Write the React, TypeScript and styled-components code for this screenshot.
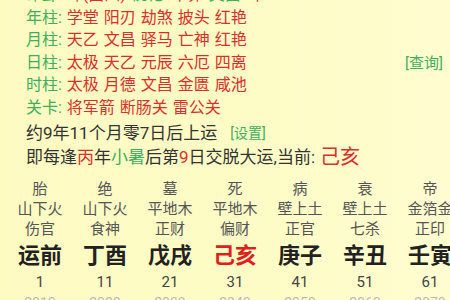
import React from "react";
import styled, { createGlobalStyle } from "styled-components";

const Global = createGlobalStyle`
  html, body { margin: 0; padding: 0; }
  body {
    width: 450px;
    height: 300px;
    overflow: hidden;
    background: linear-gradient(90deg, #fdfbc2 0%, #fefcc6 60%, #fffdd0 100%);
    font-family: "Roboto", "Noto Sans CJK SC", sans-serif;
  }
`;

const Page = styled.div`
  margin-top: -16px;
  display: flex;
  flex-direction: column;
`;

const InfoBlock = styled.div`
  padding-left: 26px;
  padding-right: 7px;
  display: flex;
  flex-direction: column;
`;

const InfoLine = styled.div`
  height: 22.5px;
  line-height: 22.5px;
  font-size: 16px;
  word-spacing: 1px;
  white-space: nowrap;
  display: flex;
  justify-content: space-between;
  align-items: center;
`;

const Label = styled.span`
  color: #3fae5e;
`;

const Value = styled.span`
  color: #d8302c;
`;

const Link = styled.span`
  color: #3fae5e;
  font-size: 15px;
`;

const Sentence = styled.div<{ $top?: number }>`
  padding-left: 26px;
  height: 24px;
  line-height: 24px;
  font-size: 17px;
  color: #333;
  white-space: nowrap;
  margin-top: ${(p) => p.$top ?? 0}px;
  display: flex;
  align-items: center;
`;

const SmallLink = styled.span`
  color: #3fae5e;
  font-size: 14px;
  margin-left: 13px;
`;

const Red = styled.span<{ $big?: boolean }>`
  color: #d8302c;
  font-size: ${(p) => (p.$big ? "20px" : "inherit")};
  margin-left: ${(p) => (p.$big ? "5px" : "0")};
`;

const Green = styled.span`
  color: #3fae5e;
`;

const Grid = styled.div`
  margin-top: 10px;
  margin-left: 7.5px;
  display: grid;
  grid-template-columns: repeat(7, 65px);
  width: 455px;
`;

const Column = styled.div`
  display: flex;
  flex-direction: column;
  align-items: center;
  white-space: nowrap;
`;

const Cell = styled.div<{ $h: number; $size: number; $color: string; $bold?: boolean }>`
  height: ${(p) => p.$h}px;
  line-height: ${(p) => p.$h}px;
  font-size: ${(p) => p.$size}px;
  color: ${(p) => p.$color};
  font-weight: ${(p) => (p.$bold ? 700 : 400)};
`;

const infoRows: { label: string; values: string[]; link?: string }[] = [
  { label: "年柱:", values: ["学堂 阳刃 劫煞 披头 红艳"] },
  { label: "月柱:", values: ["天乙 文昌 驿马 亡神 红艳"] },
  { label: "日柱:", values: ["太极 天乙 元辰 六厄 四离"], link: "[查询]" },
  { label: "时柱:", values: ["太极 月德 文昌 金匮 咸池"] },
  { label: "关卡:", values: ["将军箭 断肠关 雷公关"] },
];

const columns = [
  { stage: "胎", nayin: "山下火", god: "伤官", pillar: "运前", age: "1", year: "2010" },
  { stage: "绝", nayin: "山下火", god: "食神", pillar: "丁酉", age: "11", year: "2020" },
  { stage: "墓", nayin: "平地木", god: "正财", pillar: "戊戌", age: "21", year: "2030" },
  { stage: "死", nayin: "平地木", god: "偏财", pillar: "己亥", age: "31", year: "2040", current: true },
  { stage: "病", nayin: "壁上土", god: "正官", pillar: "庚子", age: "41", year: "2050" },
  { stage: "衰", nayin: "壁上土", god: "七杀", pillar: "辛丑", age: "51", year: "2060" },
  { stage: "帝", nayin: "金箔金", god: "正印", pillar: "壬寅", age: "61", year: "2070" },
];

export default function App() {
  return (
    <>
      <Global />
      <Page>
        <InfoBlock>
          <InfoLine>
            <span>
              <Label>命卦: </Label>
              <Value>坤(西四) </Value>
              <Label>桃花: </Label>
              <Value>午卯 </Value>
              <Label>文昌: </Label>
              <Value>午</Value>
            </span>
          </InfoLine>
          {infoRows.map((r) => (
            <InfoLine key={r.label}>
              <span>
                <Label>{r.label} </Label>
                <Value>{r.values.join(" ")}</Value>
              </span>
              {r.link && <Link>{r.link}</Link>}
            </InfoLine>
          ))}
        </InfoBlock>
        <Sentence $top={2}>
          约9年11个月零7日后上运<SmallLink>[设置]</SmallLink>
        </Sentence>
        <Sentence>
          即每逢<Red>丙</Red>年<Green>小暑</Green>后第<Red>9</Red>日交脱大运,当前:
          <Red $big>己亥</Red>
        </Sentence>
        <Grid>
          {columns.map((c) => (
            <Column key={c.age}>
              <Cell $h={20} $size={15} $color="#555">{c.stage}</Cell>
              <Cell $h={20} $size={15} $color="#555">{c.nayin}</Cell>
              <Cell $h={21} $size={15} $color="#555">{c.god}</Cell>
              <Cell $h={31} $size={22} $color={c.current ? "#e0201c" : "#222"} $bold>
                {c.pillar}
              </Cell>
              <Cell $h={22} $size={15} $color="#444">{c.age}</Cell>
              <Cell $h={20} $size={14} $color="#bbb">{c.year}</Cell>
            </Column>
          ))}
        </Grid>
      </Page>
    </>
  );
}
